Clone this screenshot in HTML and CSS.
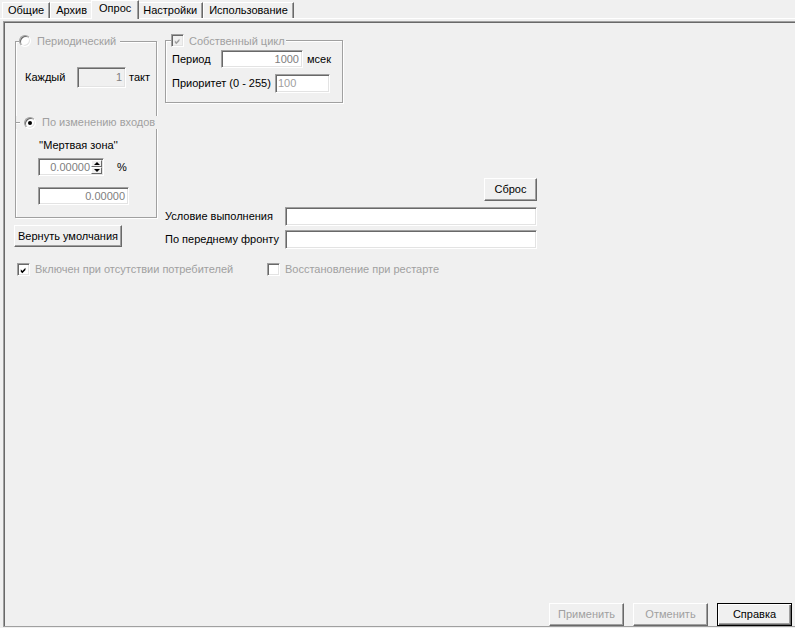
FILE: index.html
```html
<!DOCTYPE html>
<html lang="ru">
<head>
  <meta charset="UTF-8">
  <meta name="viewport" content="width=device-width, initial-scale=1.0">
  <title>Опрос</title>
  <link rel="stylesheet" href="styles.css">
</head>
<body>
  <div class="dialog">
    <!-- Tabs -->
    <div class="tabs">
      <div class="tab">Общие</div>
      <div class="tab">Архив</div>
      <div class="tab active">Опрос</div>
      <div class="tab">Настройки</div>
      <div class="tab">Использование</div>
    </div>

    <!-- Tab page -->
    <div class="page">
      <div class="top">
        <!-- Left column: polling mode -->
        <div class="left-col">
          <div class="group periodic">
            <div class="group-title">
              <span class="radio"></span>
              <span class="disabled-text">Периодический</span>
            </div>
            <div class="row every">
              <span class="lbl">Каждый</span>
              <div class="edit readonly w-every">1</div>
              <span class="unit">такт</span>
            </div>
            <div class="sub-title">
              <span class="radio checked"></span>
              <span class="disabled-text">По изменению входов</span>
            </div>
            <div class="dead-zone">''Мертвая зона''</div>
            <div class="row spin-row">
              <div class="spin">
                <div class="spin-value">0.00000</div>
                <div class="spin-btns">
                  <span class="spin-btn up"></span>
                  <span class="spin-btn down"></span>
                </div>
              </div>
              <span class="pct">%</span>
            </div>
            <div class="edit w-zone">0.00000</div>
          </div>
          <button class="btn defaults">Вернуть умолчания</button>
        </div>

        <!-- Right column: own cycle + conditions -->
        <div class="right-col">
          <div class="group cycle">
            <div class="group-title">
              <span class="check disabled">
                <svg width="9" height="9" viewBox="0 0 9 9"><polygon points="1,3 3,5 7,1 7,4 3,8 1,6"/></svg>
              </span>
              <span class="disabled-text">Собственный цикл</span>
            </div>
            <div class="row period">
              <span class="lbl">Период</span>
              <div class="edit w-period">1000</div>
              <span class="unit">мсек</span>
            </div>
            <div class="row prio">
              <span class="lbl">Приоритет (0 - 255)</span>
              <div class="edit w-prio">100</div>
            </div>
          </div>
          <button class="btn reset">Сброс</button>
          <div class="row cond">
            <span class="lbl">Условие выполнения</span>
            <div class="edit w-cond"></div>
          </div>
          <div class="row cond second">
            <span class="lbl">По переднему фронту</span>
            <div class="edit w-cond"></div>
          </div>
        </div>
      </div>

      <!-- Options -->
      <div class="checks">
        <div class="check-item first">
          <span class="check">
            <svg width="9" height="9" viewBox="0 0 9 9"><polygon points="1,3 3,5 7,1 7,4 3,8 1,6"/></svg>
          </span>
          <span class="disabled-text">Включен при отсутствии потребителей</span>
        </div>
        <div class="check-item">
          <span class="check"></span>
          <span class="disabled-text">Восстановление при рестарте</span>
        </div>
      </div>

      <!-- Dialog buttons -->
      <div class="footer">
        <button class="btn action" disabled>Применить</button>
        <button class="btn action" disabled>Отменить</button>
        <button class="btn action default">Справка</button>
      </div>
    </div>
  </div>
</body>
</html>
```

FILE: styles.css
```css
/* Global */
* {
  box-sizing: border-box;
}

body {
  margin: 0;
  background: #f0f0f0;
  font-family: "Liberation Sans", Arial, sans-serif;
  font-size: 11px;
  line-height: 13px;
  color: #000;
}

.dialog {
  width: 795px;
  height: 628px;
  overflow: hidden;
}

/* Tabs */
.tabs {
  display: flex;
  align-items: flex-start;
  height: 19px;
  padding-left: 2px;
  border-bottom: 1px solid #fff;
}

.tab {
  margin-top: 2px;
  height: 16px;
  padding: 1px 5px 0 5px;
  border-top: 1px solid #fff;
  border-left: 1px solid #fff;
  border-right: 1px solid #696969;
  box-shadow: inset -1px 0 0 #a0a0a0;
  white-space: nowrap;
}

.tab.active {
  position: relative;
  z-index: 1;
  margin: 0 -2px 0 -2px;
  height: 19px;
  padding: 1px 7px 0 7px;
  background: #f0f0f0;
}

/* Page */
.page {
  margin: 2px 0 0 3px;
  height: 606px;
  border-top: 1px solid #a0a0a0;
  border-left: 1px solid #a0a0a0;
  border-bottom: 1px solid #a0a0a0;
  box-shadow: inset 1px 1px 0 #696969;
  display: flex;
  flex-direction: column;
}

.top {
  display: flex;
  align-items: flex-start;
}

/* Group boxes */
.group {
  position: relative;
  border: 1px solid #a0a0a0;
  box-shadow: 1px 1px 0 #fff, inset 1px 1px 0 #fff;
}

.group-title {
  position: absolute;
  display: flex;
  align-items: center;
  height: 12px;
  line-height: 12px;
  background: #f0f0f0;
  white-space: nowrap;
}

.disabled-text {
  color: #a0a0a0;
  white-space: nowrap;
}

.row {
  display: flex;
  align-items: center;
}

.lbl {
  flex: none;
  white-space: nowrap;
}

/* Left column */
.left-col {
  margin: 19px 0 0 11px;
  width: 142px;
  display: flex;
  flex-direction: column;
  align-items: flex-start;
}

.periodic {
  width: 142px;
  height: 177px;
  padding-top: 25px;
}

.periodic .group-title {
  left: 3px;
  top: -7px;
  gap: 6px;
  padding-right: 4px;
}

.every {
  margin-left: 9px;
  height: 21px;
}

.every .lbl {
  width: 52px;
}

.unit {
  margin-left: 3px;
}

.sub-title {
  display: flex;
  align-items: center;
  gap: 6px;
  margin: 28px -2px 0 0;
  height: 13px;
  background: #f0f0f0;
}

.sub-title::before {
  content: "";
  width: 4px;
  height: 1px;
  margin-right: -6px;
  background: #a0a0a0;
  box-shadow: 0 1px 0 #fff;
}

.sub-title .radio {
  margin-left: 4px;
}

.dead-zone {
  margin: 10px 0 0 23px;
}

.spin-row {
  margin: 6px 0 0 22px;
}

.pct {
  margin-left: 13px;
}

/* Edits */
.edit {
  display: flex;
  align-items: center;
  justify-content: flex-end;
  padding: 0 3px;
  background: #fff;
  color: #808080;
  border: 1px solid;
  border-color: #a0a0a0 #fff #fff #a0a0a0;
  box-shadow: inset 1px 1px 0 #696969, inset -1px -1px 0 #e3e3e3;
  white-space: nowrap;
}

.edit.readonly {
  background: #f0f0f0;
}

.w-every {
  width: 49px;
  height: 21px;
}

.w-zone {
  margin: 11px 0 0 22px;
  width: 91px;
  height: 18px;
}

.w-period {
  width: 82px;
  height: 18px;
}

.w-prio {
  width: 55px;
  height: 19px;
  justify-content: flex-start;
  padding: 0 2px;
  color: #a0a0a0;
}

.w-cond {
  width: 252px;
  height: 19px;
}

/* Spin edit */
.spin {
  display: flex;
  width: 66px;
  height: 18px;
  background: #fff;
  border: 1px solid;
  border-color: #a0a0a0 #fff #fff #a0a0a0;
  box-shadow: inset 1px 1px 0 #696969, inset -1px -1px 0 #e3e3e3;
  padding: 1px;
}

.spin-value {
  flex: 1;
  text-align: right;
  color: #808080;
  line-height: 14px;
  padding-right: 1px;
}

.spin-btns {
  width: 11px;
  display: flex;
  flex-direction: column;
}

.spin-btn {
  flex: 1;
  display: flex;
  align-items: center;
  justify-content: center;
  background: #f0f0f0;
  border: 1px solid;
  border-color: #fff #696969 #696969 #fff;
}

.spin-btn::after {
  content: "";
  border-left: 3px solid transparent;
  border-right: 3px solid transparent;
}

.spin-btn.up::after {
  border-bottom: 3px solid #000;
}

.spin-btn.down::after {
  border-top: 3px solid #000;
}

/* Radio and check boxes */
.radio {
  flex: none;
  width: 12px;
  height: 12px;
  border-radius: 50%;
  border: 1px solid;
  border-color: #a0a0a0 #fff #fff #a0a0a0;
  box-shadow: inset 1px 1px 0 #696969, inset -1px -1px 0 #e3e3e3;
  background: #fff;
  display: flex;
  align-items: center;
  justify-content: center;
}

.radio.checked::after {
  content: "";
  width: 4px;
  height: 4px;
  border-radius: 50%;
  background: #000;
}

.check {
  flex: none;
  width: 13px;
  height: 13px;
  border: 1px solid;
  border-color: #a0a0a0 #fff #fff #a0a0a0;
  box-shadow: inset 1px 1px 0 #696969, inset -1px -1px 0 #e3e3e3;
  background: #fff;
  padding: 2px;
  display: flex;
}

.check svg {
  fill: #000;
}

.check.disabled {
  background: #f0f0f0;
}

.check.disabled svg {
  fill: #a0a0a0;
}

/* Right column */
.right-col {
  margin: 18px 0 0 8px;
  width: 372px;
  display: flex;
  flex-direction: column;
  align-items: flex-start;
}

.cycle {
  width: 178px;
  height: 63px;
  padding: 9px 0 0 6px;
}

.cycle .group-title {
  left: 5px;
  top: -7px;
  height: 13px;
  gap: 5px;
  padding-right: 1px;
}

.period .lbl {
  width: 49px;
}

.period .unit {
  margin-left: 4px;
}

.prio {
  margin-top: 6px;
}

.prio .lbl {
  width: 103px;
}

.reset {
  align-self: flex-end;
  margin-top: 75px;
  width: 53px;
  height: 23px;
}

.cond {
  margin-top: 6px;
}

.cond.second {
  margin-top: 4px;
}

.cond .lbl {
  width: 120px;
}

/* Buttons */
.btn {
  font: inherit;
  color: #000;
  padding: 0;
  background: #f0f0f0;
  border: 1px solid;
  border-color: #fff #696969 #696969 #fff;
  box-shadow: inset -1px -1px 0 #a0a0a0;
  white-space: nowrap;
}

.btn:disabled {
  color: #a0a0a0;
}

.defaults {
  margin: 7px 0 0 -1px;
  width: 108px;
  height: 22px;
}

/* Check options */
.checks {
  display: flex;
  margin: 14px 0 0 13px;
}

.check-item {
  display: flex;
  align-items: center;
  gap: 5px;
}

.check-item.first {
  width: 250px;
}

/* Footer */
.footer {
  margin-top: auto;
  display: flex;
  justify-content: flex-end;
  gap: 9px;
  padding-right: 3px;
}

.action {
  width: 75px;
  height: 23px;
}

.action.default {
  border: 1px solid #000;
  box-shadow: inset 1px 1px 0 #fff, inset -1px -1px 0 #696969, inset -2px -2px 0 #a0a0a0;
}
```
